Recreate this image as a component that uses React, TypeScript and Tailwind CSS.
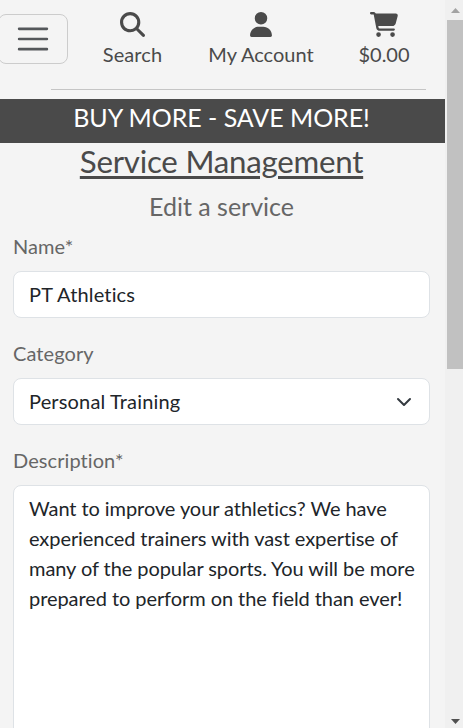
import React from "react";
import { FaCartShopping, FaMagnifyingGlass, FaUser } from "react-icons/fa6";

function NavItem({ label, className, children }: { label: string; className: string; children: React.ReactNode }) {
  return (
    <a className={`flex flex-col items-center text-[#4a4a4a] ${className}`}>
      <span className="flex h-[25px]">{children}</span>
      <span className="mt-[2px] whitespace-nowrap leading-[30px]">{label}</span>
    </a>
  );
}

function Header() {
  return (
    <header className="h-[99px]">
      <div className="flex h-[89px] items-start">
        <button className="-ml-0.5 mt-3.5 flex h-[50px] w-[70px] shrink-0 items-center justify-center rounded-lg border border-[#cccccc]">
          <svg width="38" height="38" viewBox="0 0 30 30" fill="none" stroke="#54575a" strokeWidth="2" strokeLinecap="round" strokeMiterlimit="10">
            <path d="M4 7h22M4 15h22M4 23h22" />
          </svg>
        </button>
        <nav className="flex pt-3">
          <NavItem label="Search" className="ml-[34px] w-[61px] tracking-[0.1px]">
            <FaMagnifyingGlass className="h-[25px] w-[25px]" />
          </NavItem>
          <NavItem label="My Account" className="ml-[44px] w-[108px]">
            <FaUser className="h-[25px] w-[22px]" />
          </NavItem>
          <NavItem label="$0.00" className="ml-[43px] w-[52px]">
            <FaCartShopping className="h-[25px] w-[28px]" />
          </NavItem>
        </nav>
      </div>
      <hr className="ml-[51px] w-[375px] border-[#c5c5c5]" />
    </header>
  );
}

function Field({ label, children }: { label: string; children: React.ReactNode }) {
  return (
    <label className="mb-5 block">
      <span className="mb-[10px] block h-[30px] leading-[30px] tracking-[0.08px] text-[#666666]">{label}</span>
      {children}
    </label>
  );
}

function Scrollbar() {
  return (
    <aside className="flex h-full w-[18px] shrink-0 flex-col items-end bg-[#f0f0f0]">
      <div className="flex h-5 w-4 items-center justify-center">
        <svg width="9" height="5" viewBox="0 0 9 5"><path d="M0 5L4.5 0L9 5Z" fill="#a3a3a3" /></svg>
      </div>
      <div className="h-[349px] w-4 bg-[#c1c1c1]" />
      <div className="mt-auto flex h-[14px] w-4 items-center justify-center">
        <svg width="9" height="5" viewBox="0 0 9 5"><path d="M0 0H9L4.5 5Z" fill="#505050" /></svg>
      </div>
    </aside>
  );
}

export default function App() {
  return (
    <div className="flex h-[728px] w-[463px] overflow-hidden bg-[#f4f4f4] font-['Lato',sans-serif] text-[20px] [font-variant-ligatures:none]">
      <main className="h-full w-[445px] overflow-hidden">
        <Header />
        <div className="h-11 bg-[#4a4a4a] pr-[2px] text-center text-[25px] leading-[36px] tracking-[-0.05px] text-white">BUY MORE - SAVE MORE!</div>
        <h1 className="h-[43px] pr-[2px] text-center text-[31.25px] leading-[36px] tracking-[-0.24px] text-[#4a4a4a] underline decoration-[3px] underline-offset-[3px]">Service Management</h1>
        <h2 className="h-[46px] pr-[2px] text-center text-[25px] leading-[40px] text-[#666666]">Edit a service</h2>
        <form className="ml-[13px] -mt-px w-[417px]">
          <Field label="Name*">
            <input className="block h-[47px] w-full rounded-lg border border-[#dee2e6] bg-white px-[15px] pb-0.5 tracking-[0.15px] text-[#212529] [font-variant-ligatures:none]" defaultValue="PT Athletics" />
          </Field>
          <Field label="Category">
            <span className="flex h-[47px] items-center justify-between rounded-lg border border-[#dee2e6] bg-white pl-[15px] pr-[17px] text-[#212529]">
              <span className="pb-0.5 tracking-[0.16px]">Personal Training</span>
              <svg width="16" height="16" viewBox="0 0 16 16" fill="none" stroke="#343a40" strokeWidth="2" strokeLinecap="round" strokeLinejoin="round">
                <path d="m2 5 6 6 6-6" />
              </svg>
            </span>
          </Field>
          <Field label="Description*">
            <textarea
              className="block h-[300px] w-full resize-none overflow-hidden rounded-lg border border-[#dee2e6] bg-white py-[7px] pl-[15px] pr-0 leading-[30px] tracking-[-0.07px] text-[#212529] [font-variant-ligatures:none]"
              defaultValue={"Want to improve your athletics? We have\nexperienced trainers with vast expertise of\nmany of the popular sports. You will be more\nprepared to perform on the field than ever!"}
            />
          </Field>
        </form>
      </main>
      <Scrollbar />
    </div>
  );
}
